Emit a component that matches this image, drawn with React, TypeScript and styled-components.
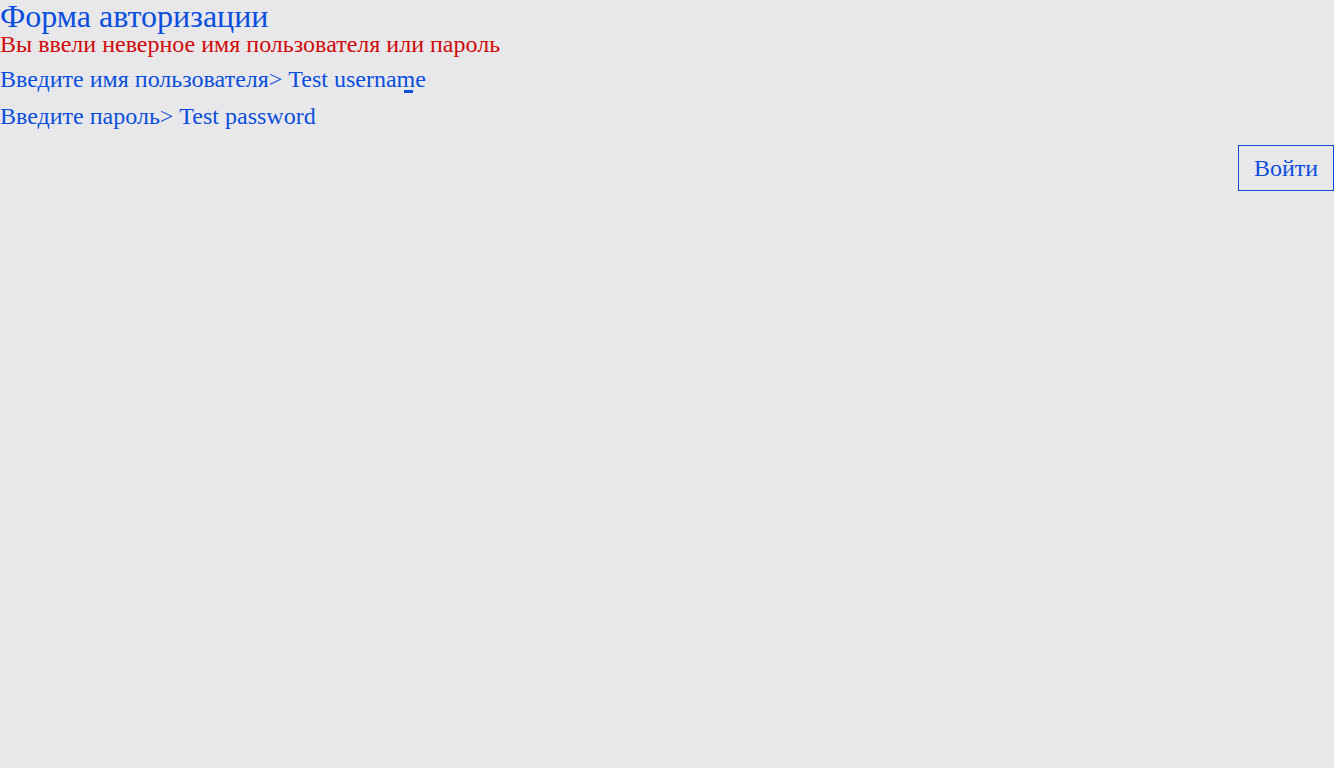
import React from "react";
import styled, { createGlobalStyle } from "styled-components";

const Global = createGlobalStyle`
  html, body { margin: 0; padding: 0; background: #e8e8eb; }
  body { font-family: "Liberation Serif", "Times New Roman", serif; }
`;

const Page = styled.div`
  display: flex;
  flex-direction: column;
  min-height: 768px;
  background: #e8e8eb;
  color: #0a4fdc;
`;

const Title = styled.h1`
  margin: 0;
  font-size: 32px;
  font-weight: normal;
  line-height: 32px;
  color: #0a4fdc;
`;

const Error = styled.div`
  font-size: 24px;
  line-height: 24px;
  color: #d00a0a;
`;

const Prompts = styled.div`
  display: flex;
  flex-direction: column;
  padding-top: 5px;
`;

const Line = styled.div`
  font-size: 24px;
  line-height: 37px;
  color: #0a4fdc;
  white-space: pre;
`;

const Cursor = styled.span`
  position: relative;
  &::after {
    content: "";
    position: absolute;
    left: 7px;
    width: 9px;
    bottom: -1px;
    height: 3px;
    background: #0a4fdc;
  }
`;

const Actions = styled.div`
  display: flex;
  justify-content: flex-end;
  margin-top: 10px;
`;

const Button = styled.button`
  font-family: "Liberation Serif", "Times New Roman", serif;
  font-size: 24px;
  color: #0a4fdc;
  background: transparent;
  border: 1px solid #0a4fdc;
  border-radius: 0;
  padding: 0 14px;
  height: 46px;
  width: 96px;
  cursor: pointer;
`;

export default function App() {
  return (
    <>
      <Global />
      <Page>
        <Title>Форма авторизации</Title>
        <Error>Вы ввели неверное имя пользователя или пароль</Error>
        <Prompts>
          <Line>
            Введите имя пользователя&gt; Test userna<Cursor>m</Cursor>e
          </Line>
          <Line>Введите пароль&gt; Test password</Line>
        </Prompts>
        <Actions>
          <Button>Войти</Button>
        </Actions>
      </Page>
    </>
  );
}
